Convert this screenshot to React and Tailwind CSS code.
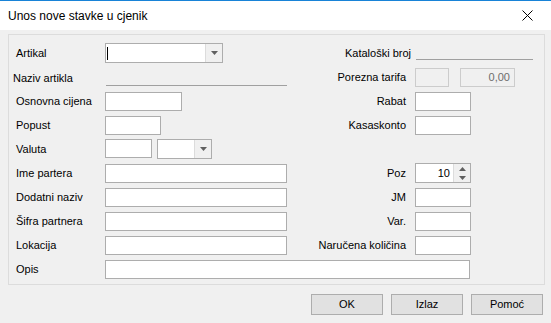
import { ChevronDown } from 'lucide-react';

const font = { fontFamily: '"Liberation Sans", Arial, sans-serif' };

function Field({ className = '' }) {
  return <div className={`h-[19px] border border-[#adadad] bg-white ${className}`} />;
}

function Arrow() {
  return (
    <svg width="7" height="4" viewBox="0 0 7 4">
      <path d="M0 0h7L3.5 4z" fill="#606060" />
    </svg>
  );
}

function Combo({ className = '', caret = false }) {
  return (
    <div className={`flex h-[20px] border border-[#adadad] bg-white ${className}`}>
      <div className="flex flex-1 items-center pl-[1px]">
        {caret && <div className="h-[13px] w-px bg-black" />}
      </div>
      <div className="flex w-[17px] items-center justify-center border-l border-[#dcdcdc] bg-[#f0f0f0]">
        <Arrow />
      </div>
    </div>
  );
}

function Spin({ value }) {
  return (
    <div className="flex h-[20px] w-[56px] border border-[#adadad] bg-white">
      <div className="flex flex-1 items-center justify-end pr-[3px] text-[11px]">{value}</div>
      <div className="flex w-[17px] flex-col border-l border-[#dcdcdc] bg-[#f0f0f0]">
        <div className="flex flex-1 items-center justify-center">
          <svg width="7" height="4" viewBox="0 0 7 4"><path d="M0 4h7L3.5 0z" fill="#606060" /></svg>
        </div>
        <div className="flex flex-1 items-center justify-center">
          <Arrow />
        </div>
      </div>
    </div>
  );
}

function Row({ left, leftField, right, rightField, labelPad = 'pr-[9px]' }) {
  return (
    <div className="flex h-[20px] items-center">
      <div className="w-[89px]">{left}</div>
      <div className="w-[182px]">{leftField}</div>
      <div className={`flex-1 text-right ${labelPad}`}>{right}</div>
      <div className="w-[122px]">{rightField}</div>
    </div>
  );
}

export default function App() {
  return (
    <div className="h-[323px] w-[551px] overflow-hidden bg-[#f0f0f0] text-[11px] text-black" style={font}>
      <div className="flex h-[30px] items-center justify-between border-t border-[#1883d7] bg-white pl-2 pr-[18px]">
        <span className="text-[12px]">Unos nove stavke u cjenik</span>
        <svg width="11" height="11" viewBox="0 0 11 11">
          <path d="M0.5 0.5l10 10M10.5 0.5l-10 10" stroke="#000" strokeWidth="1" />
        </svg>
      </div>

      <div className="px-2 pt-1">
        <div className="flex w-[537px] flex-col gap-1 border border-[#dcdcdc] pt-2 pb-[5px] pl-[7px] pr-[7px]">
          <Row
            left="Artikal"
            leftField={<Combo className="w-[118px]" caret />}
            right="Kataloški broj"
            labelPad="pr-[4px]"
            rightField={<div className="mt-[12px] ml-px h-px w-[117px] bg-[#a0a0a0]" />}
          />
          <div className="flex h-[20px] items-center">
            <div className="-ml-[3px] w-[92px] pt-[3px]">Naziv artikla</div>
            <div className="flex h-full w-[182px] flex-col justify-end pb-px pl-px">
              <div className="h-px bg-[#a0a0a0]" />
            </div>
            <div className="flex-1 pr-[9px] text-right">Porezna tarifa</div>
            <div className="flex w-[122px] gap-[11px]">
              <div className="h-[19px] w-[34px] border border-[#cccccc] bg-[#f0f0f0]" />
              <div className="flex h-[19px] w-[55px] items-center justify-end border border-[#cccccc] bg-[#f0f0f0] pr-[4px] text-[#6d6d6d]">
                0,00
              </div>
            </div>
          </div>
          <Row left="Osnovna cijena" leftField={<Field className="w-[77px]" />} right="Rabat" rightField={<Field className="w-[56px]" />} />
          <Row left="Popust" leftField={<Field className="w-[56px]" />} right="Kasaskonto" rightField={<Field className="w-[56px]" />} />
          <Row
            left="Valuta"
            leftField={
              <div className="flex gap-[5px]">
                <Field className="w-[47px]" />
                <Combo className="w-[55px]" />
              </div>
            }
          />
          <Row left="Ime partera" leftField={<Field className="w-[182px]" />} right="Poz" rightField={<Spin value="10" />} />
          <Row left="Dodatni naziv" leftField={<Field className="w-[182px]" />} right="JM" rightField={<Field className="w-[56px]" />} />
          <Row left="Šifra partnera" leftField={<Field className="w-[182px]" />} right="Var." rightField={<Field className="w-[56px]" />} />
          <Row left="Lokacija" leftField={<Field className="w-[182px]" />} right="Naručena količina" rightField={<Field className="w-[56px]" />} />
          <div className="flex h-[20px] items-center">
            <div className="w-[89px]">Opis</div>
            <Field className="w-[365px]" />
          </div>
        </div>

        <div className="mt-[9px] flex justify-end gap-2 pr-[0px]">
          {['OK', 'Izlaz', 'Pomoć'].map((b) => (
            <button
              key={b}
              className="flex h-[21px] w-[72px] items-center justify-center border border-[#adadad] bg-[#e1e1e1] text-[11px]"
            >
              {b}
            </button>
          ))}
        </div>
      </div>
    </div>
  );
}
